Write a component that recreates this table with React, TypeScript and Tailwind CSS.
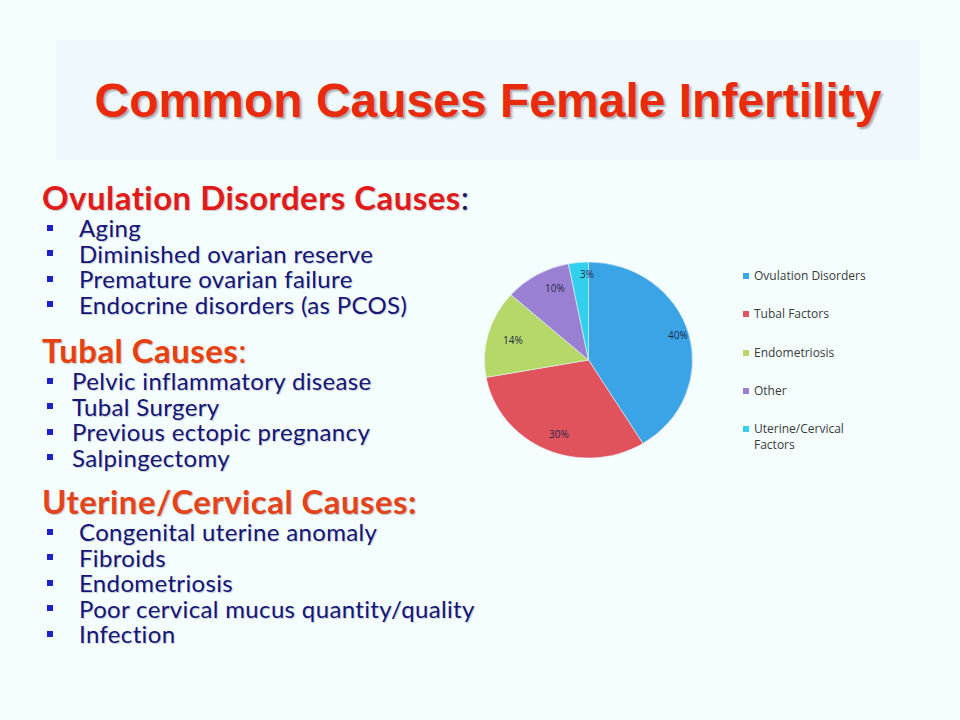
import React from "react";

const bodyFont = { fontFamily: "Lato, 'Open Sans', sans-serif" };

type Slice = { label: string; value: number; color: string; lx: number; ly: number; text: string };

const slices: Slice[] = [
  { label: "Ovulation Disorders", value: 40, color: "#3ba4e6", lx: 184, ly: 78, text: "40%" },
  { label: "Tubal Factors", value: 30, color: "#e0525c", lx: 65, ly: 177, text: "30%" },
  { label: "Endometriosis", value: 14, color: "#b6d868", lx: 19, ly: 83, text: "14%" },
  { label: "Other", value: 10, color: "#9a80d2", lx: 61, ly: 31, text: "10%" },
  { label: "Uterine/Cervical Factors", value: 3, color: "#33d0ee", lx: 96, ly: 17, text: "3%" },
];

function Pie() {
  const cx = 104.5;
  const cy = 99;
  const rx = 104;
  const ry = 98;
  const total = slices.reduce((s, x) => s + x.value, 0);
  let acc = 0;
  const pt = (f: number) => {
    const a = f * Math.PI * 2;
    return [cx + rx * Math.sin(a), cy - ry * Math.cos(a)];
  };
  return (
    <svg width="210" height="200" viewBox="0 0 210 200">
      {slices.map((s, i) => {
        const f0 = acc / total;
        acc += s.value;
        const f1 = acc / total;
        const [x0, y0] = pt(f0);
        const [x1, y1] = pt(f1);
        const large = f1 - f0 > 0.5 ? 1 : 0;
        const d = `M ${cx} ${cy} L ${x0} ${y0} A ${rx} ${ry} 0 ${large} 1 ${x1} ${y1} Z`;
        return <path key={i} d={d} fill={s.color} stroke="#e8f4fa" strokeWidth="0.6" />;
      })}
      {slices.map((s, i) => (
        <text
          key={"t" + i}
          x={s.lx}
          y={s.ly}
          fontSize="10"
          fill="#1c2a4a"
          style={{ fontFamily: "'Open Sans', Lato, sans-serif" }}
        >
          {s.text}
        </text>
      ))}
    </svg>
  );
}

function Legend() {
  return (
    <div className="flex flex-col text-[12px] leading-[16px] text-[#3a3a3a]" style={{ fontFamily: "'Open Sans', Lato, sans-serif" }}>
      {slices.map((s, i) => (
        <div key={i} className="flex items-start gap-[5px] h-[38.3px]">
          <span className="mt-[5px] w-[6px] h-[6px] shrink-0" style={{ background: s.color }} />
          <span className={i === 4 ? "w-[110px]" : ""}>{s.label}</span>
        </div>
      ))}
    </div>
  );
}

function Section({
  title,
  items,
  indent,
  titleColor,
  className,
}: {
  title: React.ReactNode;
  items: string[];
  indent: string;
  titleColor: string;
  className?: string;
}) {
  return (
    <div className={className}>
      <div
        className="text-[33px] font-bold leading-[36px] tracking-[0.45px] whitespace-nowrap [text-shadow:1px_1px_1px_rgba(0,0,0,0.22)]"
        style={{ ...bodyFont, color: titleColor }}
      >
        {title}
      </div>
      <ul className="flex flex-col">
        {items.map((t) => (
          <li key={t} className="flex items-center h-[25.5px] pl-[5px]">
            <span className="w-[6px] h-[6px] bg-[#1a22c8] shrink-0" />
            <span
              className={`${indent} text-[24px] leading-[25.5px] tracking-[0.35px] whitespace-nowrap text-[#15157a] [text-shadow:1px_1px_1px_rgba(0,0,0,0.2)]`}
              style={bodyFont}
            >
              {t}
            </span>
          </li>
        ))}
      </ul>
    </div>
  );
}

export default function App() {
  return (
    <div className="w-[960px] h-[720px] bg-[#f4feff] overflow-hidden flex flex-col">
      <div className="mt-[40px] ml-[56px] w-[864px] h-[120px] bg-[#eef8fd] flex items-center justify-center">
        <h1
          className="text-[48px] font-bold text-[#ea2a0c] leading-none [text-shadow:2px_2px_2px_rgba(0,0,0,0.3)] pt-[2px] whitespace-nowrap"
          style={{ fontFamily: "'Liberation Sans', Arial, sans-serif" }}
        >
          Common Causes Female Infertility
        </h1>
      </div>
      <div className="flex mt-[19px]">
        <div className="pl-[42px] w-[470px] shrink-0 flex flex-col">
          <Section
            title={
              <>
                Ovulation Disorders Causes<span className="text-[#1a1a5a] font-normal">:</span>
              </>
            }
            titleColor="#e21a1a"
            indent="ml-[26px]"
            items={["Aging", "Diminished ovarian reserve", "Premature ovarian failure", "Endocrine disorders (as PCOS)"]}
          />
          <Section
            className="mt-[15px]"
            title={
              <>
                Tubal Causes<span className="font-normal">:</span>
              </>
            }
            titleColor="#e8400e"
            indent="ml-[19px]"
            items={["Pelvic inflammatory disease", "Tubal Surgery", "Previous ectopic pregnancy", "Salpingectomy"]}
          />
          <Section
            className="mt-[13px]"
            title="Uterine/Cervical Causes:"
            titleColor="#e5431a"
            indent="ml-[26px]"
            items={[
              "Congenital uterine anomaly",
              "Fibroids",
              "Endometriosis",
              "Poor cervical mucus quantity/quality",
              "Infection",
            ]}
          />
        </div>
        <div className="flex pt-[82px] ml-[14px]">
          <Pie />
          <div className="ml-[49px] pt-[7px]">
            <Legend />
          </div>
        </div>
      </div>
    </div>
  );
}
